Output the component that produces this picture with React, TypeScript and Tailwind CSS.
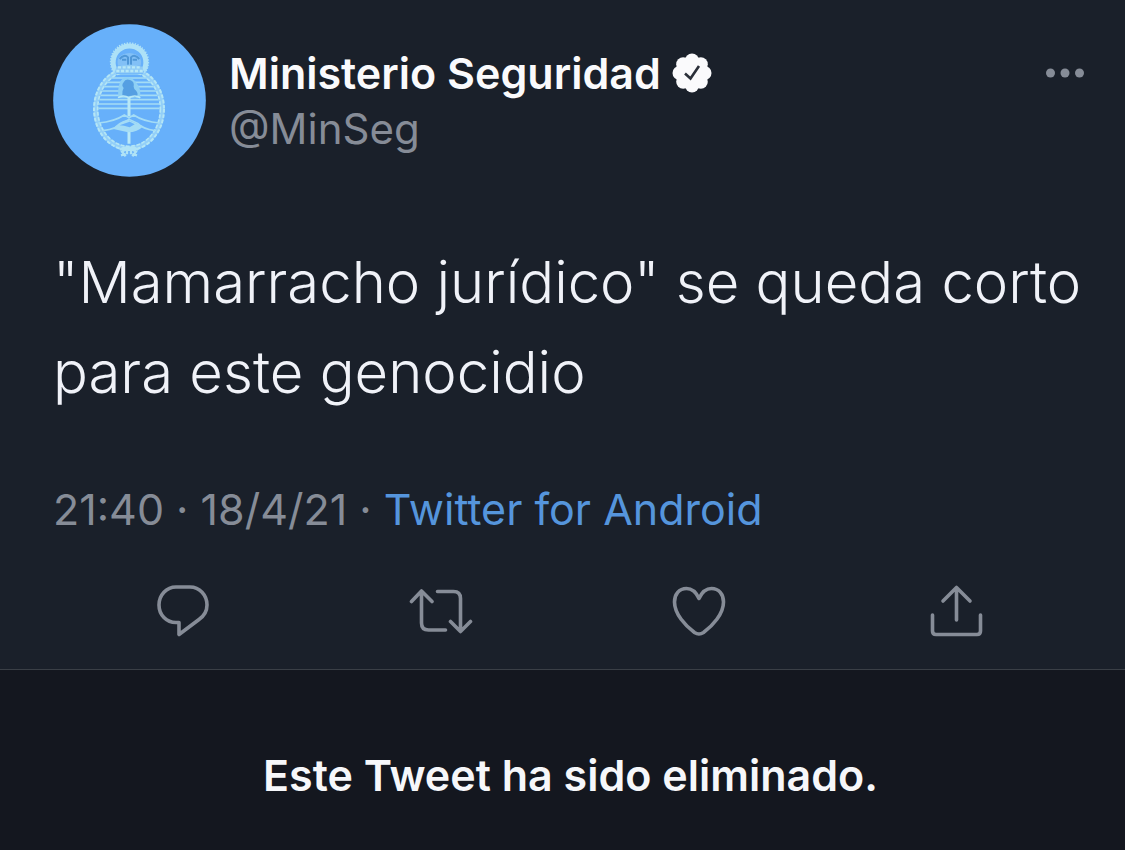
import type { ReactNode } from "react";

const skyLines = [176, 189, 202, 215, 228, 241, 254, 267];

function Crest() {
  return (
    <svg viewBox="24 27 459 459" className="size-[153px] shrink-0" role="img" aria-label="Ministerio Seguridad">
      <defs>
        <clipPath id="oval">
          <ellipse cx="252" cy="282" rx="92" ry="116" />
        </clipPath>
      </defs>
      <circle cx="253.500" cy="256.500" r="229" fill="#67b0fa" />

      {/* Laurel oval */}
      <ellipse cx="252" cy="282" rx="100" ry="118" fill="none" stroke="#93cff8" strokeWidth="14" />
      <ellipse cx="252" cy="282" rx="105" ry="123" fill="none" stroke="#b5e6f5" strokeWidth="6" strokeDasharray="11 5" />
      <ellipse cx="252" cy="282" rx="94" ry="112" fill="none" stroke="#b5e6f5" strokeWidth="5" strokeDasharray="11 5" />

      {/* Sky stripes */}
      <g clipPath="url(#oval)" stroke="#a4dcf5" strokeWidth="5">
        {skyLines.map((y) => (
          <path key={y} d={`M150 ${y}h204`} />
        ))}
        <path d="M150 280h204" />
      </g>

      {/* Rising sun */}
      <path d="M214 176a50 50 0 1 1 79 0z" fill="#67b0fa" />
      <path d="M212 168a49 49 0 1 1 83 0" fill="none" stroke="#ade1f7" strokeWidth="15" />
      <path d="M207 172a56 56 0 1 1 93 0" fill="none" stroke="#ade1f7" strokeWidth="6" strokeDasharray="4 4" />
      <path d="M219 152q-8-34 34-38 42 4 34 38z" fill="#82c0f6" />
      <path d="M224 132q14-16 25-5v22M283 132q-14-16-25-5v22M231 134h13M263 134h13" fill="none" stroke="#4f97d8" strokeWidth="6" />
      <path d="M214 155q39-12 78 0l5 19h-88z" fill="#8fcbf6" />
      <path d="M219 157h70M214 168h80" stroke="#b8e8f6" strokeWidth="7" strokeDasharray="9 5" />

      {/* Cap and pike */}
      <path d="M220 249q-4-52 20-62 22-3 35 18 16 20 9 44z" fill="#8ed0f5" />
      <path
        d="M232 241q-2-12 4-22-8-8 0-17 5-12 19-7 14 4 11 20 1 8 6 11 10 11 3 20-10 3-19-4-11 7-24-1z"
        fill="#559fe2"
      />
      <path d="M219 248q16-10 33 0 17-10 34 0" fill="none" stroke="#b8e8f6" strokeWidth="5" />
      <path d="M252 246v58M252 346v40" stroke="#b8e8f6" strokeWidth="9" />

      {/* Clasped hands */}
      <path
        d="M160 324q48-4 78-24l14 8 14-8q30 20 78 24M174 347q42-6 56-22l22-12 26 12q14 16 52 22"
        fill="none"
        stroke="#a4dcf5"
        strokeWidth="5"
      />
      <path d="M205 342q13-22 44-28l45 20q-16 18-45 18z" fill="#a4dcf5" />
      <path d="M224 331l30-11 15 8-15 9-17-5z" fill="#67b0fa" />

      {/* Ribbon */}
      <path
        d="M224 404q24-14 49 6l-11 14M280 404q-24-14-49 6l11 14M246 400v18M258 400v18M228 421l14-4M276 421l-14-4"
        fill="none"
        stroke="#b0e3f6"
        strokeWidth="7"
      />
    </svg>
  );
}

function VerifiedBadge() {
  return (
    <svg viewBox="0 0 40 40" className="size-10 shrink-0" role="img" aria-label="Cuenta verificada">
      <g fill="#fafafc">
        <circle cx="20" cy="20" r="15" />
        <circle cx="20" cy="7.500" r="7" />
        <circle cx="28.800" cy="11.200" r="7" />
        <circle cx="32.500" cy="20" r="7" />
        <circle cx="28.800" cy="28.800" r="7" />
        <circle cx="20" cy="32.500" r="7" />
        <circle cx="11.200" cy="28.800" r="7" />
        <circle cx="7.500" cy="20" r="7" />
        <circle cx="11.200" cy="11.200" r="7" />
      </g>
      <path d="M13 20.500l5.500 5L27 13" fill="none" stroke="#2a2f39" strokeWidth="2.600" />
    </svg>
  );
}

function Action({ label, children }: { label: string; children: ReactNode }) {
  return (
    <button type="button" aria-label={label} className="flex justify-center">
      <svg
        viewBox="0 0 64 64"
        className="size-16"
        fill="none"
        stroke="currentColor"
        strokeWidth="3.600"
        strokeLinecap="round"
        strokeLinejoin="round"
      >
        {children}
      </svg>
    </button>
  );
}

export default function App() {
  return (
    <main className="flex min-h-screen flex-col bg-[#14171f] font-['Inter','Liberation_Sans',sans-serif]">
      <article className="border-b border-[#3a3f46] bg-[#1a202a] pt-6 pb-[26px] text-[#868c97]">
        {/* Author */}
        <header className="flex items-start pr-10 pl-[53px]">
          <Crest />
          <div className="ml-[23px] flex-1 pt-[22px]">
            <div className="flex items-center gap-[11px]">
              <h1 className="text-[43px] leading-[54px] font-semibold whitespace-nowrap text-[#fafafc]">
                Ministerio Seguridad
              </h1>
              <VerifiedBadge />
            </div>
            <p className="text-[42px] leading-[58px]">@MinSeg</p>
          </div>
          <button type="button" aria-label="Más opciones" className="mt-10">
            <svg viewBox="0 0 40 18" className="h-[18px] w-10" fill="currentColor">
              <circle cx="5.500" cy="9" r="4.500" />
              <circle cx="20" cy="9" r="4.500" />
              <circle cx="34.500" cy="9" r="4.500" />
            </svg>
          </button>
        </header>

        {/* Tweet text */}
        <p className="mt-[60px] pr-6 pl-[53px] text-[58px] leading-[90px] font-light text-[#f0f2f8]">
          "Mamarracho jurídico" se queda corto para este genocidio
        </p>

        <p className="mt-[65px] pl-[53px] text-[43px] leading-[54px]">
          <time>21:40 · 18/4/21</time> ·{" "}
          <a href="#source" className="text-[#5595dc]">
            Twitter for Android
          </a>
        </p>

        {/* Actions */}
        <div className="mt-[43px] grid grid-cols-4 pr-[39px] pl-[54px]">
          <Action label="Responder">
            <path d="M25 8h14c9.500 0 17 8 17 18 0 6-3 11-8 14.500L28 55.500V43.500h-3C15.500 43.500 8 36 8 26S15.500 8 25 8z" />
          </Action>
          <Action label="Retwittear">
            <path d="M2.500 22.500L12.500 12l10.500 10.500M12.500 12v32q0 7 7 7h17M28.500 12.500h16q7 0 7 7v33M41.500 42.500l10 10 10-10" />
          </Action>
          <Action label="Me gusta">
            <path d="M32 19.500C29 13 25 9.500 19.500 9.500 12 9.500 7.500 15.500 7.500 23c0 12 11 24 20 30.500q4.500 3 9 0C45.500 47 56.500 35 56.500 23c0-7.500-4.500-13.500-12-13.500C39 9.500 35 13 32 19.500z" />
          </Action>
          <Action label="Compartir">
            <path d="M31.500 41V8.500M18 22L31.500 8.500 45 22M7.500 36v16q0 3.500 3.500 3.500h41q3.500 0 3.500-3.500V36" />
          </Action>
        </div>
      </article>

      {/* Deleted notice */}
      <p className="pt-[78px] pl-4 text-center text-[43px] leading-[54px] font-semibold text-[#f6f7fa]">
        Este Tweet ha sido eliminado.
      </p>
    </main>
  );
}
